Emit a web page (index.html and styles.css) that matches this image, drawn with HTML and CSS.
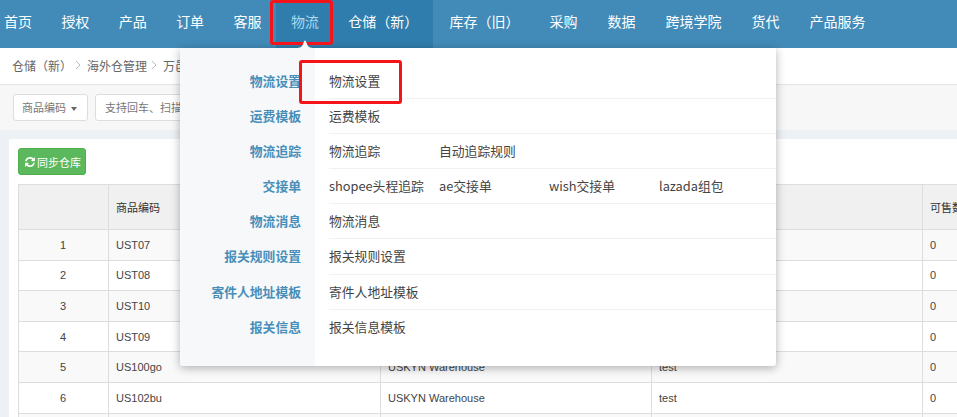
FILE: index.html
```html
<!DOCTYPE html>
<html lang="zh-CN">
<head>
<meta charset="utf-8">
<title>海外仓管理</title>
<link rel="stylesheet" href="styles.css">
</head>
<body>
<nav class="topnav">
  <a class="nav-item">首页</a>
  <a class="nav-item">授权</a>
  <a class="nav-item">产品</a>
  <a class="nav-item">订单</a>
  <a class="nav-item">客服</a>
  <a class="nav-item nav-active">物流<svg class="caret-up" viewBox="0 0 18 8"><path d="M0 8C4 8 6 7 7 4L8.2 1Q9 0 9.8 1L11 4C12 7 14 8 18 8Z"/></svg></a>
  <a class="nav-item nav-dark">仓储（新）</a>
  <a class="nav-item">库存（旧）</a>
  <a class="nav-item">采购</a>
  <a class="nav-item">数据</a>
  <a class="nav-item">跨境学院</a>
  <a class="nav-item">货代</a>
  <a class="nav-item">产品服务</a>
</nav>

<div class="crumbs">
  <span>仓储（新）</span>
  <svg class="chev" viewBox="0 0 6 10"><polyline points="1,1 5,5 1,9"/></svg>
  <span>海外仓管理</span>
  <svg class="chev chev-tight" viewBox="0 0 6 10"><polyline points="1,1 5,5 1,9"/></svg>
  <span>万邑通仓库</span>
</div>

<div class="toolbar">
  <div class="select">商品编码<span class="caret-down"></span></div>
  <div class="search">支持回车、扫描枪搜索</div>
</div>

<main class="content">
  <section class="card">
    <button class="sync-btn">
      <svg class="sync-icon" viewBox="0 0 1536 1536"><path d="M1511 928q0 5-1 7-64 268-268 434.5t-478 166.5q-146 0-282.5-55t-243.5-157l-129 129q-19 19-45 19t-45-19-19-45v-448q0-26 19-45t45-19h448q26 0 45 19t19 45-19 45l-137 137q71 66 161 102t187 36q134 0 250-65t186-179q11-17 53-117 8-23 30-23h192q13 0 22.5 9.5t9.5 22.5zm25-800v448q0 26-19 45t-45 19h-448q-26 0-45-19t-19-45 19-45l138-138q-148-137-349-137-134 0-250 65t-186 179q-11 17-53 117-8 23-30 23h-199q-13 0-22.5-9.5t-9.5-22.5v-7q65-268 270-434.5t480-166.5q146 0 284 55.5t245 156.5l130-129q19-19 45-19t45 19 19 45z"/></svg>同步仓库
    </button>
    <table class="grid">
      <colgroup><col class="c-idx"><col class="c-a"><col class="c-b"><col class="c-b"><col class="c-num"></colgroup>
      <thead>
        <tr><th></th><th>商品编码</th><th>仓库</th><th>备注</th><th>可售数量</th></tr>
      </thead>
      <tbody>
        <tr><td class="idx">1</td><td>UST07</td><td>USKYN Warehouse</td><td>test</td><td>0</td></tr>
        <tr><td class="idx">2</td><td>UST08</td><td>USKYN Warehouse</td><td>test</td><td>0</td></tr>
        <tr><td class="idx">3</td><td>UST10</td><td>USKYN Warehouse</td><td>test</td><td>0</td></tr>
        <tr><td class="idx">4</td><td>UST09</td><td>USKYN Warehouse</td><td>test</td><td>0</td></tr>
        <tr><td class="idx">5</td><td>US100go</td><td>USKYN Warehouse</td><td>test</td><td>0</td></tr>
        <tr><td class="idx">6</td><td>US102bu</td><td>USKYN Warehouse</td><td>test</td><td>0</td></tr>
        <tr><td class="idx"></td><td></td><td></td><td></td><td></td></tr>
      </tbody>
    </table>
  </section>
</main>

<div class="dropdown">
  <div class="dd-labels">
    <div class="dd-label">物流设置</div>
    <div class="dd-label">运费模板</div>
    <div class="dd-label">物流追踪</div>
    <div class="dd-label">交接单</div>
    <div class="dd-label">物流消息</div>
    <div class="dd-label">报关规则设置</div>
    <div class="dd-label">寄件人地址模板</div>
    <div class="dd-label">报关信息</div>
  </div>
  <div class="dd-links">
    <div class="dd-row"><a>物流设置</a></div>
    <div class="dd-row"><a>运费模板</a></div>
    <div class="dd-row"><a>物流追踪</a><a>自动追踪规则</a></div>
    <div class="dd-row"><a>shopee头程追踪</a><a>ae交接单</a><a>wish交接单</a><a>lazada组包</a></div>
    <div class="dd-row"><a>物流消息</a></div>
    <div class="dd-row"><a>报关规则设置</a></div>
    <div class="dd-row"><a>寄件人地址模板</a></div>
    <div class="dd-row dd-last"><a>报关信息模板</a></div>
  </div>
</div>

<div class="mark mark-nav"></div>
<div class="mark mark-menu"></div>
</body>
</html>
```
FILE: styles.css
```css
* { box-sizing: border-box; }
html, body { margin: 0; height: 417px; overflow: hidden; }
body {
  position: relative;
  background: #edf0f5;
  color: #333;
  font-family: "Liberation Sans", "Noto Sans CJK SC", sans-serif;
  font-size: 11px;
}
.topnav {
  display: flex;
  height: 48px;
  padding-left: 4px;
  margin-left: -14.7px;
  background: #428bb8;
  width: calc(100% + 14.7px);
}
.nav-item {
  flex: none;
  padding: 0 14.7px;
  line-height: 42px;
  color: #fff;
  font-family: "Noto Sans CJK SC", sans-serif;
  font-size: 14px;
}
.nav-active { position: relative; background: #2f7dac; color: #a8dcf5; }
.nav-dark { background: #2f7dac; margin-right: 1.6px; }
.nav-dark ~ .nav-item { padding: 0 15px; }
.caret-up {
  position: absolute;
  z-index: 10;
  left: 50%;
  bottom: 0;
  width: 18px;
  height: 8px;
  margin-left: -9px;
  fill: #f6f8fa;
}
.crumbs {
  display: flex;
  align-items: center;
  height: 37px;
  padding: 0 0 2px 12px;
  background: #fff;
  border-bottom: 1px solid #e4e4e4;
  color: #666;
  font-family: "Noto Sans CJK SC", sans-serif;
  font-size: 12px;
  white-space: nowrap;
}
.chev { width: 6px; height: 10px; margin: 0 6px 0 3px; fill: none; stroke: #bbb; stroke-width: 1; }
.chev-tight { margin: 0 6px 0 4px; }
.toolbar {
  display: flex;
  align-items: center;
  gap: 7px;
  height: 45px;
  padding: 0 0 0 13px;
  background: #f7f7f7;
  font-family: "Noto Sans CJK SC", sans-serif;
  font-size: 11px;
  color: #777;
}
.select, .search {
  height: 27px;
  line-height: 25px;
  background: #fff;
  border: 1px solid #ddd;
  border-radius: 3px;
}
.select { width: 75px; padding-left: 8px; }
.search { width: 200px; padding-left: 9px; }
.caret-down {
  display: inline-block;
  margin-left: 5px;
  vertical-align: middle;
  border: 3.5px solid transparent;
  border-bottom: 0;
  border-top: 4px solid #666;
}
.content { padding: 9px 0 0 9px; }
.card {
  background: #fff;
  padding: 9px 0 0 9px;
  height: 300px;
  overflow: hidden;
}
.sync-btn {
  display: flex;
  align-items: center;
  gap: 2px;
  width: 68px;
  height: 27px;
  padding: 0 0 0 6px;
  background: #5cb85c;
  border: 1px solid #4cae4c;
  border-radius: 3px;
  color: #fff;
  font-family: "Noto Sans CJK SC", sans-serif;
  font-size: 11px;
}
.sync-icon { width: 10px; height: 10px; fill: #fff; flex: none; }
.grid {
  margin-top: 9px;
  table-layout: fixed;
  width: 1175px;
  border-collapse: collapse;
  border: 1px solid #ddd;
}
.c-idx { width: 90px; }
.c-a { width: 272px; }
.c-b { width: 271px; }
.c-num { width: 271px; }
.grid th, .grid td {
  border: 1px solid #ddd;
  padding: 0 8px 0 7px;
  text-align: left;
  font-weight: 400;
  white-space: nowrap;
}
.grid th { height: 45px; padding-bottom: 1px; background: #f0f0f0; font-family: "Noto Sans CJK SC", sans-serif; }
.grid td { height: 30.6px; color: #444; }
.grid tbody tr:nth-child(odd) td { background: #f9f9f9; }
.grid td.idx { text-align: center; }
.dropdown {
  position: absolute;
  left: 180px;
  top: 48px;
  display: flex;
  width: 596px;
  height: 318px;
  background: #fff;
  border-radius: 0 0 3px 3px;
  box-shadow: 0 2px 10px rgba(0, 0, 0, 0.3);
  font-family: "Noto Sans CJK SC", sans-serif;
  font-size: 12.8px;
  overflow: hidden;
}
.dd-labels {
  flex: none;
  width: 135px;
  padding-top: 16px;
  background: #f6f8fa;
}
.dd-label {
  height: 35.1px;
  line-height: 33px;
  padding-right: 14px;
  text-align: right;
  font-weight: 700;
  color: #478fb9;
  white-space: nowrap;
}
.dd-links { flex: 1; padding: 16px 0 0 14px; }
.dd-row {
  display: flex;
  height: 35.1px;
  line-height: 33px;
  border-bottom: 1px solid #f1f1f1;
  color: #444;
}
.dd-row a { flex: none; width: 110px; white-space: nowrap; }
.dd-last { border-bottom: 0; }
.mark {
  position: absolute;
  border: 3px solid #f5141a;
  border-radius: 3px;
}
.mark-nav { left: 270px; top: 0; width: 63px; height: 45px; }
.mark-menu { left: 299px; top: 60px; width: 103px; height: 44px; }
```
